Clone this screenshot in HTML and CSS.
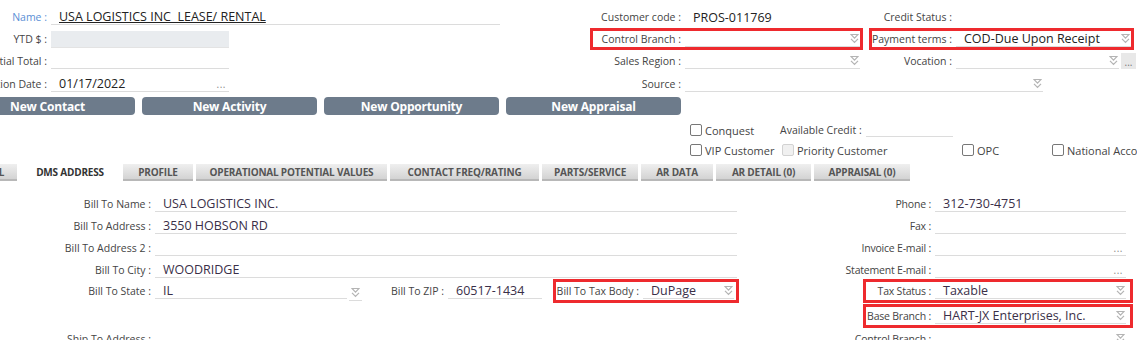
FILE: index.html
```html
<html>
    <head>
        <link rel="stylesheet" href="styles.css">
        <title>Customer</title>
    </head>
    <body>
    <div class="page">
        <!-- header fields -->
        <div class="top">
            <div class="row">
                <div class="a"><span class="lbl la name">Name :</span><span class="fld fa-wide"><u>USA LOGISTICS INC&nbsp; LEASE/ RENTAL</u></span></div>
                <div class="box bb"><span class="lbl lb">Customer code :</span><span class="fld fb plain">PROS-011769</span></div>
                <div class="box bc"><span class="lbl lc">Credit Status :</span></div>
            </div>
            <div class="row">
                <div class="a"><span class="lbl la">YTD $ :</span><span class="fld fa ro"></span></div>
                <div class="box bb red"><span class="lbl lb">Control Branch :</span><span class="fld fb"><span></span><svg class="dd" viewBox="0 0 9 11" width="9" height="11"><path d="M1 1.5h7L4.5 5.2z M1 5.8l3.5 3.7 3.5-3.7" fill="none" stroke="#b4b4b4" stroke-width="1.2"/></svg></span></div>
                <div class="box bc red"><span class="lbl lc">Payment terms :</span><span class="fld fc"><span>COD-Due Upon Receipt</span><svg class="dd" viewBox="0 0 9 11" width="9" height="11"><path d="M1 1.5h7L4.5 5.2z M1 5.8l3.5 3.7 3.5-3.7" fill="none" stroke="#b4b4b4" stroke-width="1.2"/></svg></span></div>
            </div>
            <div class="row">
                <div class="a"><span class="lbl la">Potential Total :</span><span class="fld fa"></span></div>
                <div class="box bb"><span class="lbl lb">Sales Region :</span><span class="fld fb"><span></span><svg class="dd" viewBox="0 0 9 11" width="9" height="11"><path d="M1 1.5h7L4.5 5.2z M1 5.8l3.5 3.7 3.5-3.7" fill="none" stroke="#b4b4b4" stroke-width="1.2"/></svg></span></div>
                <div class="box bc"><span class="lbl lc">Vocation :</span><span class="fld fv"><span></span><svg class="dd" viewBox="0 0 9 11" width="9" height="11"><path d="M1 1.5h7L4.5 5.2z M1 5.8l3.5 3.7 3.5-3.7" fill="none" stroke="#b4b4b4" stroke-width="1.2"/></svg></span><span class="more">...</span></div>
            </div>
            <div class="row last">
                <div class="a"><span class="lbl la">Activation Date :</span><span class="fld fa"><span>01/17/2022</span><span class="dots">...</span></span></div>
                <div class="box bb"><span class="lbl lb">Source :</span><span class="fld fs"><span></span><svg class="dd" viewBox="0 0 9 11" width="9" height="11"><path d="M1 1.5h7L4.5 5.2z M1 5.8l3.5 3.7 3.5-3.7" fill="none" stroke="#b4b4b4" stroke-width="1.2"/></svg></span></div>
            </div>
        </div>

        <div class="btns">
            <a class="btn">New Contact</a>
            <a class="btn">New Activity</a>
            <a class="btn">New Opportunity</a>
            <a class="btn">New Appraisal</a>
        </div>

        <div class="checks">
            <div class="crow">
                <label class="chk c1"><span class="cb"></span>Conquest</label>
                <span class="avail">Available Credit :</span><span class="afld"></span>
            </div>
            <div class="crow">
                <label class="chk c2"><span class="cb"></span>VIP Customer</label>
                <label class="chk c3"><span class="cb off"></span>Priority Customer</label>
                <label class="chk c4"><span class="cb"></span>OPC</label>
                <label class="chk"><span class="cb"></span>National Account</label>
            </div>
        </div>

        <div class="tabs">
            <span class="tab">GENERAL</span>
            <span class="tab on">DMS ADDRESS</span>
            <span class="tab">PROFILE</span>
            <span class="tab">OPERATIONAL POTENTIAL VALUES</span>
            <span class="tab">CONTACT FREQ/RATING</span>
            <span class="tab">PARTS/SERVICE</span>
            <span class="tab">AR DATA</span>
            <span class="tab">AR DETAIL (0)</span>
            <span class="tab">APPRAISAL (0)</span>
        </div>

        <!-- DMS address tab -->
        <div class="bottom">
            <div class="lrow">
                <div class="left"><span class="lbl lw">Bill To Name :</span><span class="fld fl val">USA LOGISTICS INC.</span></div>
                <div class="box br"><span class="lbl lr">Phone :</span><span class="fld fr val">312-730-4751</span></div>
            </div>
            <div class="lrow">
                <div class="left"><span class="lbl lw">Bill To Address :</span><span class="fld fl val">3550 HOBSON RD</span></div>
                <div class="box br"><span class="lbl lr">Fax :</span><span class="fld fr"></span></div>
            </div>
            <div class="lrow">
                <div class="left"><span class="lbl lw">Bill To Address 2 :</span><span class="fld fl"></span></div>
                <div class="box br"><span class="lbl lr">Invoice E-mail :</span><span class="fld fr"><span></span><span class="dots">...</span></span></div>
            </div>
            <div class="lrow">
                <div class="left"><span class="lbl lw">Bill To City :</span><span class="fld fl val">WOODRIDGE</span></div>
                <div class="box br"><span class="lbl lr">Statement E-mail :</span><span class="fld fr"><span></span><span class="dots">...</span></span></div>
            </div>
            <div class="lrow tall first">
                <div class="left">
                    <span class="lbl lw">Bill To State :</span><span class="fld fst val">IL</span>
                    <span class="ddbtn"><svg class="dd" viewBox="0 0 9 11" width="9" height="11"><path d="M1 1.5h7L4.5 5.2z M1 5.8l3.5 3.7 3.5-3.7" fill="none" stroke="#b4b4b4" stroke-width="1.2"/></svg></span>
                    <span class="lbl lz">Bill To ZIP :</span><span class="fld fz val">60517-1434</span>
                    <div class="box red bt"><span class="lbl lt">Bill To Tax Body :</span><span class="fld ft val"><span>DuPage</span><svg class="dd" viewBox="0 0 9 11" width="9" height="11"><path d="M1 1.5h7L4.5 5.2z M1 5.8l3.5 3.7 3.5-3.7" fill="none" stroke="#b4b4b4" stroke-width="1.2"/></svg></span></div>
                </div>
                <div class="box br red"><span class="lbl lr">Tax Status :</span><span class="fld fr val"><span>Taxable</span><svg class="dd" viewBox="0 0 9 11" width="9" height="11"><path d="M1 1.5h7L4.5 5.2z M1 5.8l3.5 3.7 3.5-3.7" fill="none" stroke="#b4b4b4" stroke-width="1.2"/></svg></span></div>
            </div>
            <div class="lrow tall">
                <div class="left"></div>
                <div class="box br red"><span class="lbl lr">Base Branch :</span><span class="fld fr val"><span>HART-JX Enterprises, Inc.</span><svg class="dd" viewBox="0 0 9 11" width="9" height="11"><path d="M1 1.5h7L4.5 5.2z M1 5.8l3.5 3.7 3.5-3.7" fill="none" stroke="#b4b4b4" stroke-width="1.2"/></svg></span></div>
            </div>
            <div class="lrow">
                <div class="left"><span class="lbl lw">Ship To Address :</span><span class="fld fl"></span></div>
                <div class="box br"><span class="lbl lr">Control Branch :</span><span class="fld fr"><span></span><svg class="dd" viewBox="0 0 9 11" width="9" height="11"><path d="M1 1.5h7L4.5 5.2z M1 5.8l3.5 3.7 3.5-3.7" fill="none" stroke="#b4b4b4" stroke-width="1.2"/></svg></span></div>
            </div>
        </div>
    </div>
    </body>
</html>
```

FILE: styles.css
```css
html, body {margin: 0; padding: 0; background: #fff;}
body {font-family: "Open Sans", "Noto Sans", sans-serif; color: #444;}
.page {width: 1137px; height: 340px; overflow: hidden;}

/* generic field pieces */
.top {padding-top: 6px;}
.row {display: flex; align-items: center; height: 22px;}
.row.last {margin-top: 1px;}
.a {display: flex; align-items: center; width: 590px; height: 22px; flex: none;}
.lbl {
    display: flex;
    justify-content: flex-end;
    flex: none;
    box-sizing: border-box;
    white-space: nowrap;
    padding-right: 4px;
    font-size: 10.5px;
    color: #444;
}
.lbl.name {color: #5a8fd6;}
.box {
    display: flex;
    align-items: center;
    flex: none;
    box-sizing: border-box;
    height: 22px;
    border: 3px solid transparent;
}
.box.red {border-color: #ee2a2e;}
.fld {
    display: flex;
    align-items: center;
    justify-content: space-between;
    flex: none;
    box-sizing: border-box;
    height: 16px;
    padding-left: 8px;
    border-bottom: 1px solid #dcdcdc;
    font-size: 12.5px;
    color: #222;
    white-space: nowrap;
}
.fld.plain {border-bottom: none;}
.fld.ro {background: #e9ecef; border-bottom-color: #e3e3e3; height: 17px;}
.dd {flex: none; margin-right: 1px;}
.dots {font-size: 10px; color: #8a8a8a; letter-spacing: 0.5px; margin-right: 3px; line-height: 10px;}
.more {
    flex: none;
    width: 15px;
    height: 16px;
    margin-left: 2px;
    background: #e8e8e8;
    font-size: 10px;
    color: #777;
    text-align: center;
    line-height: 18px;
}

/* header columns */
.la {width: 51px;}
.lb {width: 92px;}
.lc {width: 84px;}
.bb {width: 273px;}
.bc {width: 265px; margin-left: 6px;}
.fa {width: 178px;}
.fa-wide {width: 449px;}
.fb {width: 175px;}
.fc {width: 175px;}
.fv {width: 163px;}
.fs {width: 358px; margin-right: -190px;}

/* action buttons */
.btns {display: flex; gap: 7px; margin: 2px 0 0 -40px;}
.btn {
    display: flex;
    align-items: center;
    justify-content: center;
    flex: none;
    width: 175px;
    height: 18px;
    border-radius: 4px;
    background: #6d7b8b;
    color: #fff;
    font-weight: 700;
    font-size: 12px;
    letter-spacing: -0.2px;
}

/* checkboxes */
.checks {margin-top: 5px; padding-left: 690px;}
.crow {display: flex; align-items: center; height: 20px;}
.chk {display: flex; align-items: center; flex: none; font-size: 11px; color: #444; white-space: nowrap;}
.cb {
    flex: none;
    width: 10px;
    height: 10px;
    margin-right: 3px;
    border: 1px solid #777;
    border-radius: 2px;
    background: #fff;
}
.cb.off {border-color: #d2d2d2; background: #f0f0f0;}
.c1 {width: 90px;}
.c2 {width: 92px;}
.c3 {width: 180px;}
.c4 {width: 90px;}
.avail {font-size: 10.5px; color: #444; white-space: nowrap; width: 86px;}
.afld {width: 87px; height: 16px; border-bottom: 1px solid #dcdcdc; align-self: flex-start;}

/* tabs */
.tabs {display: flex; gap: 3px; height: 17px; margin: 4px 0 0 -53px;}
.tab {
    display: flex;
    align-items: center;
    justify-content: center;
    flex: none;
    box-sizing: border-box;
    height: 17px;
    background: linear-gradient(#efefef, #d3d3d3);
    border-bottom: 2px solid #b8b8b8;
    font-size: 10px;
    font-weight: 700;
    color: #555;
    white-space: nowrap;
    letter-spacing: -0.2px;
}
.tab.on {background: #fff; border-bottom-color: transparent; color: #333;}
.tab:nth-child(1) {width: 70px;}
.tab:nth-child(2) {width: 100px;}
.tab:nth-child(3) {width: 70px;}
.tab:nth-child(4) {width: 191px;}
.tab:nth-child(5) {width: 149px;}
.tab:nth-child(6) {width: 96px;}
.tab:nth-child(7) {width: 72px;}
.tab:nth-child(8) {width: 95px;}
.tab:nth-child(9) {width: 96px;}

/* address form */
.bottom {margin-top: 12px;}
.lrow {display: flex; align-items: center; height: 22px;}
.lrow.tall {height: 24px; margin-top: 1px;}
.lrow.tall.first {margin-top: -2px;}
.lrow.tall .box {height: 24px;}
.left {display: flex; align-items: center; width: 863px; flex: none;}
.lw {width: 155px;}
.fl {width: 582px;}
.val {color: #3a2f48;}
.br {width: 270px;}
.lr {width: 69px; letter-spacing: -0.2px;}
.fr {width: 191px;}
.fst {width: 192px;}
.ddbtn {
    display: flex;
    align-items: center;
    justify-content: center;
    flex: none;
    box-sizing: border-box;
    width: 13px;
    height: 16px;
    margin: 4px 0 0 2px;
    border-bottom: 1px solid #dcdcdc;
}
.lz {width: 86px;}
.fz {width: 94px;}
.bt {width: 186px; margin-left: 11px;}
.lt {width: 87px;}
.ft {width: 91px;}
```
